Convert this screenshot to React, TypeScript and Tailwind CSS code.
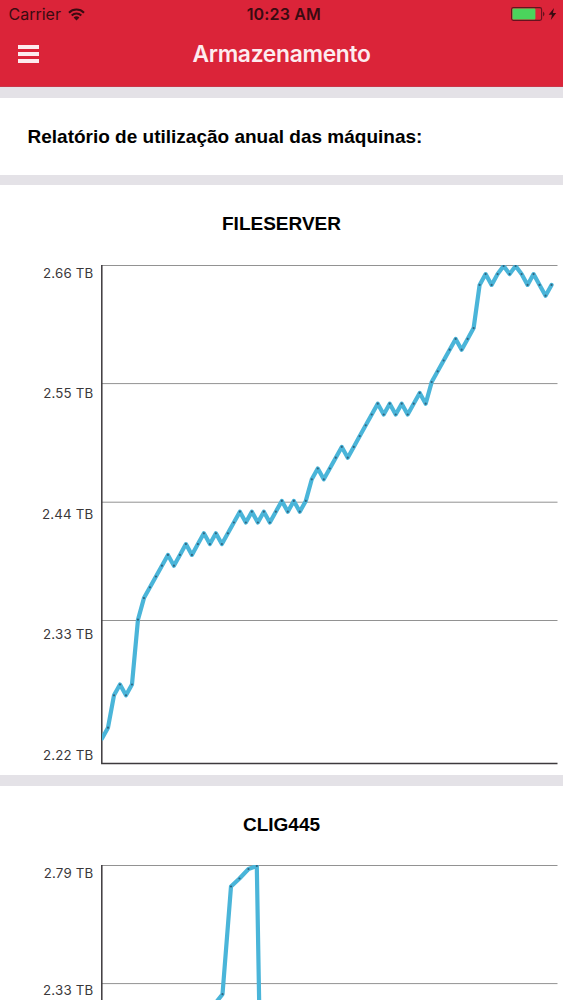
import React from "react";

type Point = [number, number];

type Machine = {
  name: string;
  labels: string[];
  points: Point[];
  labelGap: string;
};

// Steps below the reference level, one sample per entry.
const fileserverSteps = [
  42, 41, 38, 37, 38, 37, 31, 29, 28, 27, 26, 25, 26, 25, 24, 25, 24, 23, 24, 23, 24, 23, 22, 21, 22, 21, 22, 21, 22,
  21, 20, 21, 20, 21, 20, 18, 17, 18, 17, 16, 15, 16, 15, 14, 13, 12, 11, 12, 11, 12, 11, 12, 11, 10, 11, 9, 8, 7, 6,
  5, 6, 5, 4, 0, -1, 0, -1, -2, -1, -2, -1, 0, -1, 0, 1, 0,
];

const machines: Machine[] = [
  {
    name: "FILESERVER",
    labels: ["2.66 TB", "2.55 TB", "2.44 TB", "2.33 TB", "2.22 TB"],
    labelGap: "gap-[102.5px]",
    points: fileserverSteps.map((s, i): Point => [1 + i * 5.994, Math.max(1, 19.9 + s * 10.8)]),
  },
  {
    name: "CLIG445",
    labels: ["2.79 TB", "2.33 TB"],
    labelGap: "gap-[98.5px]",
    points: [
      [104, 147],
      [113, 140],
      [121.5, 129.2],
      [130, 21.5],
      [138.5, 13.5],
      [147.5, 4],
      [155.8, 1],
      [160.5, 270],
    ],
  },
];

const gridLines = [0.5, 118.6, 237.2, 355.5];

function Chart({ points }: { points: Point[] }) {
  return (
    <svg width="462" height="500" viewBox="0 0 462 500" className="block shrink-0">
      {gridLines.map((y) => (
        <line key={y} x1="1" x2="456.5" y1={y} y2={y} stroke="#929292" strokeWidth="1" />
      ))}
      <path d="M0.8 0V498.5H456.5" fill="none" stroke="#3d3a3d" strokeWidth="1.5" />
      <svg x="1" y="0" width="460" height="499" viewBox="1 0 460 499">
        <polyline
          points={points.map((p) => p.join(",")).join(" ")}
          fill="none"
          stroke="#4ab5d9"
          strokeWidth="4.2"
          strokeLinejoin="round"
          strokeLinecap="round"
        />
        {points.slice(1).map(([x, y]) => (
          <circle key={x} cx={x} cy={y} r="1.1" fill="#2f6480" />
        ))}
      </svg>
    </svg>
  );
}

function MachineCard({ machine }: { machine: Machine }) {
  return (
    <section className="h-[590px] shrink-0 bg-white">
      <h2 className="pt-[27px] text-center text-[19px] leading-6 font-bold text-black">{machine.name}</h2>
      <div className="mt-[28.5px] flex">
        <div
          className={`-mt-[1px] flex w-[94px] shrink-0 flex-col pr-[0.5px] text-right font-[Inter,sans-serif] text-[13.3px] leading-[18px] tracking-[0.2px] text-[#3a383a] ${machine.labelGap}`}
        >
          {machine.labels.map((label) => (
            <span key={label}>{label}</span>
          ))}
        </div>
        <div className="ml-[7px]">
          <Chart points={machine.points} />
        </div>
      </div>
    </section>
  );
}

function StatusBar() {
  return (
    <div className="grid h-[28px] grid-cols-3 items-center pr-[6px] pl-[8.5px] text-[16px] text-[#390b11]">
      <div className="flex items-center gap-[7px]">
        <span>Carrier</span>
        <svg width="17" height="13" viewBox="0 0 17 13" fill="none" stroke="currentColor" strokeWidth="2">
          <path d="M1 4.7C5 .5 12 .5 16 4.7M3.7 7.5C6.4 4.8 10.6 4.8 13.3 7.5" />
          <path d="M5.6 9.4Q8.5 7.2 11.4 9.4L8.5 12.4Z" fill="currentColor" stroke="none" />
        </svg>
      </div>
      <span className="pl-[2px] text-center font-semibold whitespace-nowrap tracking-[0.15px]">10:23 AM</span>
      <div className="flex items-center justify-end">
        <svg width="46" height="14" viewBox="0 0 46 14">
          <rect x="0.6" y="0.6" width="30" height="12.8" rx="1.8" fill="none" stroke="#64131e" strokeWidth="1.1" />
          <rect x="1.4" y="1.4" width="23" height="11.2" rx="1" fill="#4bd45c" />
          <path d="M32 4.5Q35 7 32 9.5Z" fill="#64131e" />
          <path d="M43 1L37.7 7.7H41L39.8 13L45.2 6.1H41.9Z" fill="#390b11" />
        </svg>
      </div>
    </div>
  );
}

export default function App() {
  return (
    <div className="flex h-[1000px] w-[563px] flex-col gap-[10.5px] overflow-hidden bg-[#e4e2e7] font-['Liberation_Sans',Arial,sans-serif]">
      <header className="h-[87px] shrink-0 border-b border-[#c9364a] bg-[#db2439] font-[Inter,sans-serif]">
        <StatusBar />
        <div className="grid h-[52px] grid-cols-[1fr_auto_1fr] items-center px-[18px]">
          <button aria-label="Menu" className="flex w-[21px] flex-col gap-[3px]">
            <span className="h-[4px] bg-[#fdebee]" />
            <span className="h-[4px] bg-[#fdebee]" />
            <span className="h-[4px] bg-[#fdebee]" />
          </button>
          <h1 className="pt-px text-[22.8px] font-semibold tracking-[-0.3px] text-[#fdecef]">Armazenamento</h1>
        </div>
      </header>
      <section className="flex h-[77px] shrink-0 items-center bg-white pl-[27.5px]">
        <p className="pt-px text-[19px] leading-6 font-bold whitespace-nowrap text-black">
          Relatório de utilização anual das máquinas:
        </p>
      </section>
      {machines.map((machine) => (
        <MachineCard key={machine.name} machine={machine} />
      ))}
    </div>
  );
}
